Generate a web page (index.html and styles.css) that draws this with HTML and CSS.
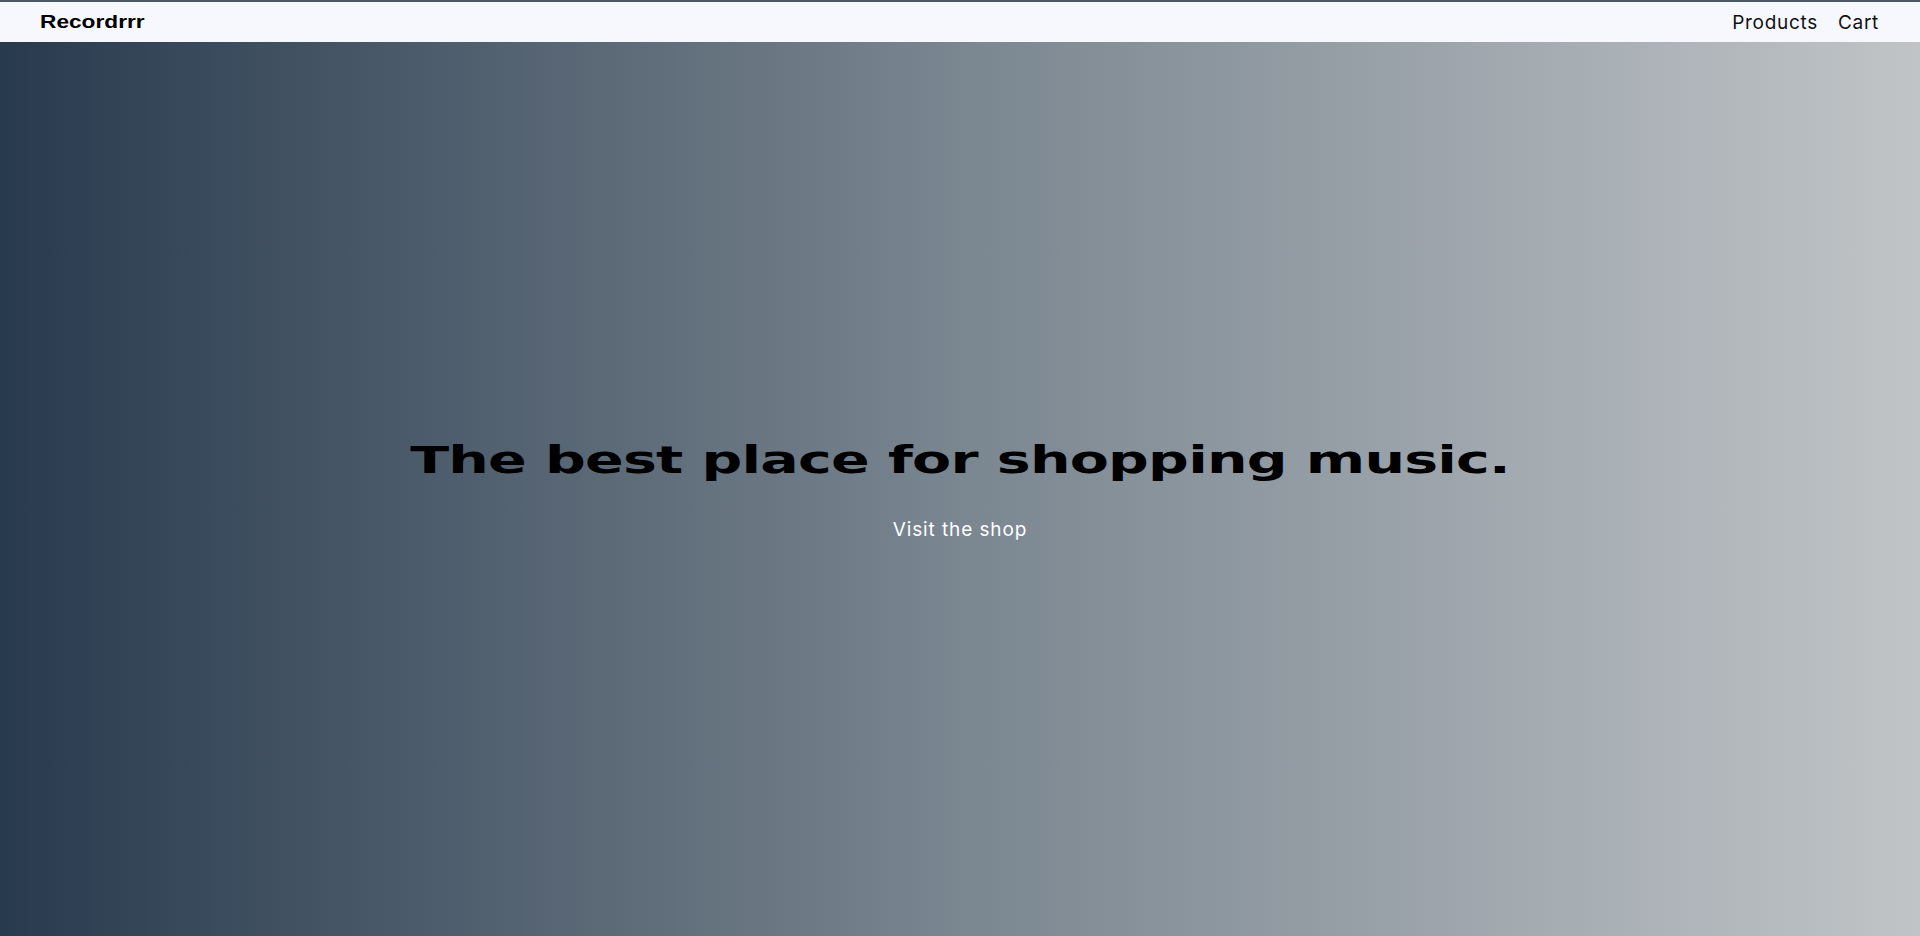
FILE: index.html
```html
<!DOCTYPE html>
<html lang="en">
<head>
<meta charset="utf-8">
<title>Recordrrr</title>
<link rel="stylesheet" href="styles.css">
</head>
<body>
<header class="topbar">
  <a class="logo" href="#"><span class="logo-text">Recordrrr</span></a>
  <nav class="nav">
    <a class="nav-link" href="#">Products</a>
    <a class="nav-link" href="#">Cart</a>
  </nav>
</header>
<main class="hero">
  <h1 class="hero-title"><span class="hero-title-text">The best place for shopping music.</span></h1>
  <a class="hero-link" href="#">Visit the shop</a>
</main>
</body>
</html>
```
FILE: styles.css
```css
* { box-sizing: border-box; }
html, body { margin: 0; padding: 0; height: 100%; }
body {
  font-family: "Inter", "Open Sans", sans-serif;
  display: flex;
  flex-direction: column;
  min-height: 936px;
  overflow: hidden;
}
a { text-decoration: none; color: inherit; }
.topbar {
  height: 42px;
  flex: 0 0 42px;
  border-top: 2px solid #4b5a66;
  background: #f7f8fe;
  display: flex;
  align-items: center;
  justify-content: space-between;
  padding: 0 41px 0 40px;
}
.logo {
  display: block;
  width: 106px;
  color: #000;
}
.logo-text {
  display: inline-block;
  font-family: "Liberation Sans", Arial, sans-serif;
  font-weight: 700;
  font-size: 18px;
  transform: scaleX(1.26);
  transform-origin: left center;
  white-space: nowrap;
}
.nav {
  display: flex;
  gap: 20px;
  align-items: center;
}
.nav-link {
  font-size: 19px;
  color: #111;
  letter-spacing: 0.7px;
}
.hero {
  flex: 1;
  background: linear-gradient(to right, #283a4e 0%, #7a8690 50%, #c0c4c7 100%);
  display: flex;
  flex-direction: column;
  align-items: center;
  justify-content: center;
  padding-bottom: 0;
}
.hero-title {
  margin: 0;
  font-family: "DejaVu Sans", "Liberation Sans", sans-serif;
  font-weight: 700;
  font-size: 37px;
  line-height: 48px;
  color: #000;
  text-align: center;
}
.hero-title-text {
  display: inline-block;
  transform: scaleX(1.54);
  transform-origin: center center;
  white-space: nowrap;
  letter-spacing: -0.5px;
}
.hero-link {
  margin-top: 33px;
  font-size: 19px;
  color: #fff;
  letter-spacing: 0.9px;
}
```
